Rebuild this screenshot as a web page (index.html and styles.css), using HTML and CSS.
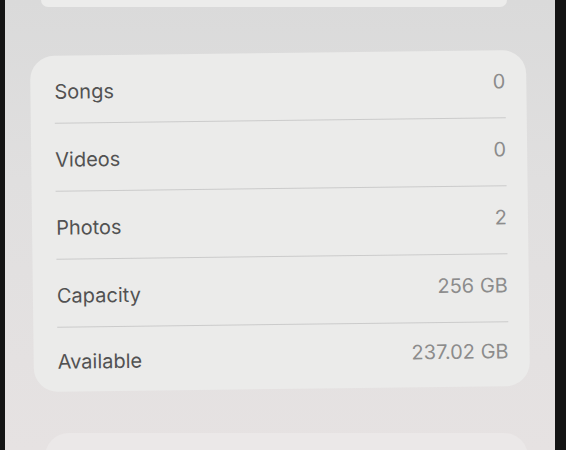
FILE: index.html
```html
<!doctype html>
<html lang="en">

<head>
  <meta charset="utf-8" />
  <meta name="viewport" content="width=device-width, initial-scale=1">
  <title>About</title>
  <link rel="stylesheet" href="styles.css">
</head>

<body>
  <div class="screen">
    <div class="top-card"></div>

    <div class="card">
      <div class="row">
        <span class="label">Songs</span>
        <span class="value">0</span>
      </div>
      <div class="row">
        <span class="label">Videos</span>
        <span class="value">0</span>
      </div>
      <div class="row">
        <span class="label">Photos</span>
        <span class="value">2</span>
      </div>
      <div class="row">
        <span class="label">Capacity</span>
        <span class="value">256 GB</span>
      </div>
      <div class="row">
        <span class="label">Available</span>
        <span class="value">237.02 GB</span>
      </div>
    </div>

    <div class="next-card"></div>
  </div>
</body>

</html>
```

FILE: styles.css
```css
html,
body {
  height: 100%;
  margin: 0;
}

body {
  background-color: #141414;
  font-family: Inter, "Liberation Sans", sans-serif;
  overflow: hidden;
}

.screen {
  height: 100%;
  margin: 0 11px 0 5px;
  background: linear-gradient(180deg, #dadada 0%, #e0dfdf 40%, #e6e2e2 100%);
  overflow: hidden;
}

.top-card {
  height: 7px;
  margin: 0 48px 0 36px;
  background-color: #ececeb;
  border-radius: 0 0 22px 22px;
}

.card {
  margin: 46px 27px 0 27px;
  padding: 0 21px 0 24px;
  background-color: #ebebea;
  border-radius: 24px;
  transform: rotate(-0.7deg);
}

.row {
  display: flex;
  justify-content: space-between;
  align-items: center;
  height: 67px;
  border-bottom: 1px solid #cbcbcb;
}

.row:last-child {
  border-bottom: none;
  height: 64px;
}

.label {
  font-size: 20px;
  color: #525252;
  padding-top: 4px;
}

.value {
  font-size: 20px;
  color: #8c8c8c;
  padding-bottom: 6px;
}

.next-card {
  height: 60px;
  margin: 44px 27px 0 40px;
  background-color: #ebe8e8;
  border-radius: 24px;
}
```
